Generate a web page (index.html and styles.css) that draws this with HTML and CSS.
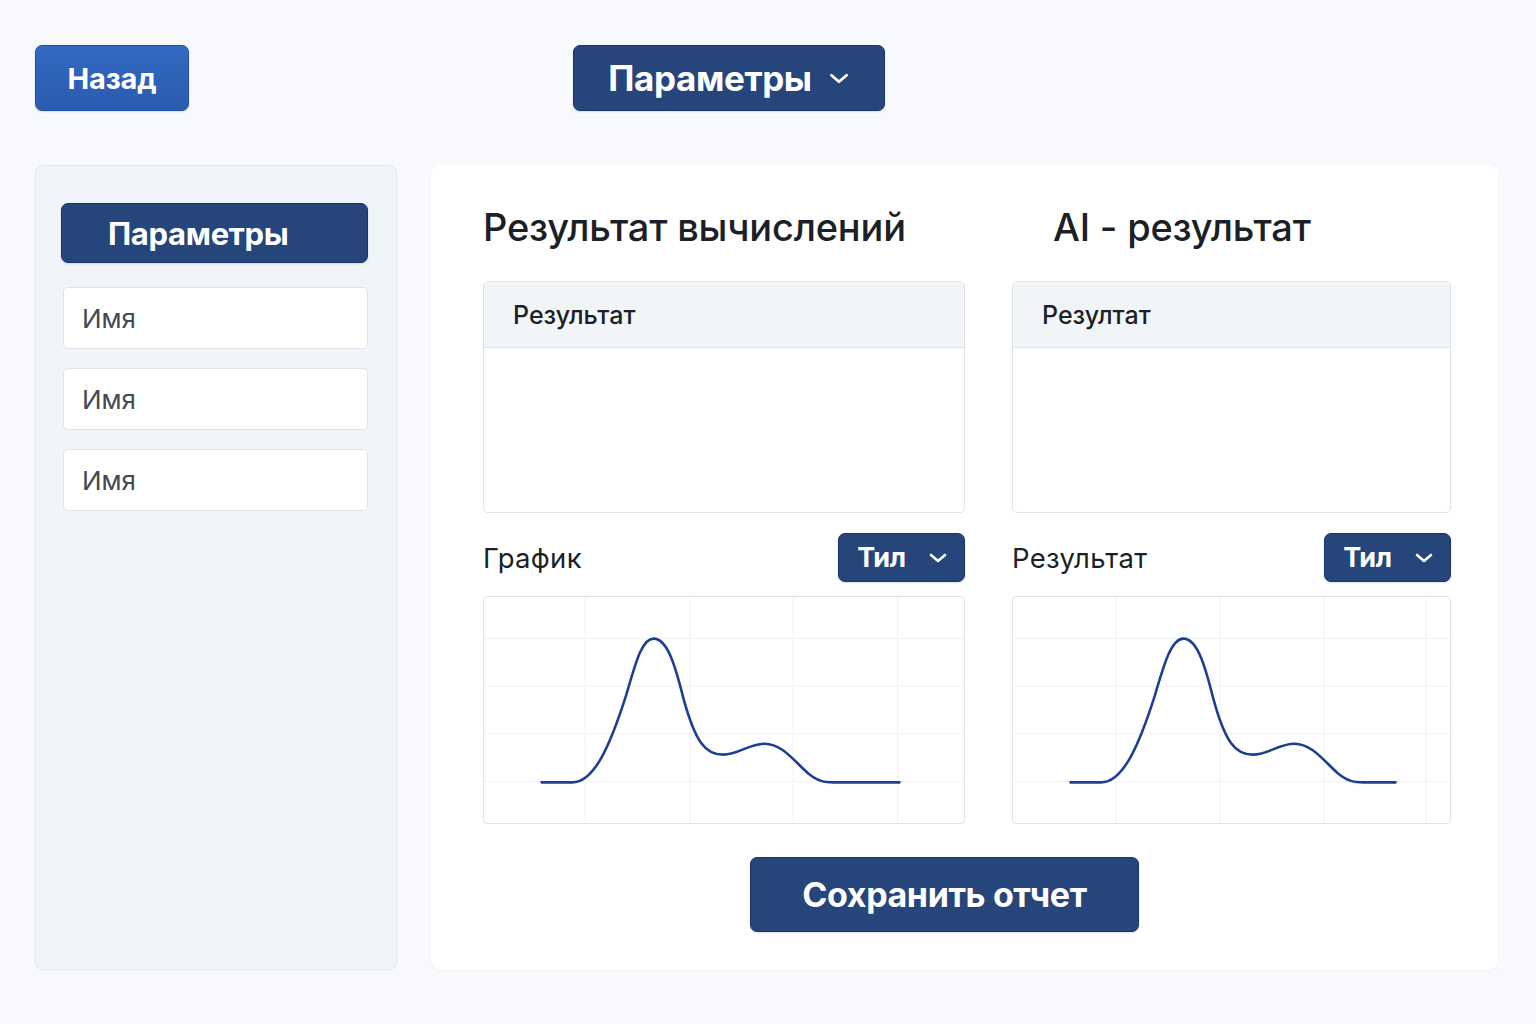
FILE: index.html
```html
<!DOCTYPE html>
<html lang="ru">
<head>
<meta charset="utf-8">
<title>Результат</title>
<link rel="stylesheet" href="styles.css">
</head>
<body>
<div class="page">
  <header class="topbar">
    <button class="btn btn-back">Назад</button>
    <button class="btn btn-params">Параметры
      <svg class="chev chev-lg" viewBox="0 0 20 12"><path d="M3 3 L10 9 L17 3"/></svg>
    </button>
  </header>
  <div class="content">
    <aside class="sidebar">
      <button class="btn btn-side">Параметры</button>
      <div class="field field-first">Имя</div>
      <div class="field">Имя</div>
      <div class="field">Имя</div>
    </aside>
    <main class="card">
      <div class="grid">
        <section class="col">
          <h2 class="title">Результат вычислений</h2>
          <div class="result">
            <div class="result-head">Результат</div>
            <div class="result-body"></div>
          </div>
          <div class="row">
            <span class="label">График</span>
            <button class="btn btn-type">Тил
              <svg class="chev" viewBox="0 0 20 12"><path d="M3 3 L10 9 L17 3"/></svg>
            </button>
          </div>
          <div class="chart">
            <svg viewBox="0 0 482 228" width="480" height="226">
              <g class="gridlines">
                <path d="M101 0 V228 M207 0 V228 M311 0 V228 M416 0 V228 M0 42 H482 M0 90 H482 M0 138 H482 M0 186 H482"/>
              </g>
              <path class="curve" d="M57,187 L88,187 C110,187 126,150 142,100 C152,66 158,42 170,42 C184,42 192,70 200,102 C212,146 222,159 240,159 C256,159 266,148 282,148 C300,148 312,166 326,178 C336,186 342,187 352,187 L418,187"/>
            </svg>
          </div>
        </section>
        <section class="col">
          <h2 class="title title-ai">AI - результат</h2>
          <div class="result">
            <div class="result-head">Резултат</div>
            <div class="result-body"></div>
          </div>
          <div class="row">
            <span class="label">Результат</span>
            <button class="btn btn-type">Тил
              <svg class="chev" viewBox="0 0 20 12"><path d="M3 3 L10 9 L17 3"/></svg>
            </button>
          </div>
          <div class="chart">
            <svg viewBox="0 0 439 228" width="437" height="226">
              <g class="gridlines">
                <path d="M103 0 V228 M208 0 V228 M313 0 V228 M416 0 V228 M0 42 H439 M0 90 H439 M0 138 H439 M0 186 H439"/>
              </g>
              <path class="curve" d="M57,187 L88,187 C110,187 126,150 142,100 C152,66 159,42 171,42 C185,42 193,70 201,102 C213,146 223,159 241,159 C257,159 267,148 283,148 C301,148 313,166 327,178 C337,186 343,187 353,187 L385,187"/>
            </svg>
          </div>
        </section>
      </div>
      <button class="btn btn-save">Сохранить отчет</button>
    </main>
  </div>
</div>
</body>
</html>
```
FILE: styles.css
```css
* { box-sizing: border-box; }
html, body { margin: 0; padding: 0; }
body {
  background: #f7f9fc;
  font-family: Inter, "Noto Sans", "Liberation Sans", sans-serif;
  color: #1a1d24;
}
.page {
  width: 1536px;
  height: 1024px;
  padding: 45px 38px 0 35px;
}
.btn {
  font-family: Inter, "Liberation Sans", sans-serif;
  font-weight: 700;
  color: #fff;
  border: 1px solid #1b3566;
  background: #25457b;
  border-radius: 7px;
  display: flex;
  align-items: center;
  justify-content: center;
  cursor: pointer;
  padding: 0;
  box-shadow: 0 1px 2px rgba(20, 40, 80, 0.15);
}
.topbar {
  display: flex;
  align-items: center;
  height: 66px;
}
.btn-back {
  width: 154px;
  height: 66px;
  font-size: 29px;
  background: linear-gradient(180deg, #3269c0 0%, #2a5bb0 100%);
  border-color: #234f9c;
  letter-spacing: -0.2px;
}
.btn-params {
  margin-left: 384px;
  width: 312px;
  height: 66px;
  font-size: 35px;
  gap: 16px;
  letter-spacing: -0.4px;
}
.chev {
  width: 20px;
  height: 12px;
  fill: none;
  stroke: #fff;
  stroke-width: 2.6;
  stroke-linecap: round;
  stroke-linejoin: round;
}
.chev-lg { width: 22px; height: 13px; }
.content {
  display: flex;
  gap: 34px;
  margin-top: 54px;
}
.sidebar {
  width: 362px;
  height: 805px;
  background: #f1f4f8;
  border: 1px solid #e2e7ee;
  border-radius: 8px;
  padding: 37px 28px 0 25px;
  display: flex;
  flex-direction: column;
}
.btn-side {
  width: 307px;
  height: 60px;
  font-size: 31px;
  justify-content: flex-start;
  padding-left: 46px;
  letter-spacing: -0.3px;
}
.field {
  margin-left: 2px;
  width: 305px;
  height: 62px;
  background: #fff;
  border: 1px solid #dfe4eb;
  border-radius: 5px;
  margin-top: 19px;
  display: flex;
  align-items: center;
  padding-left: 18px;
  font-size: 26px;
  color: #454a52;
}
.field.field-first { margin-top: 24px; }
.card {
  width: 1067px;
  height: 805px;
  background: #fff;
  border-radius: 10px;
  padding: 38px 47px 0 52px;
  box-shadow: 0 1px 3px rgba(30, 50, 90, 0.04);
}
.grid {
  display: grid;
  grid-template-columns: 482px 439px;
  column-gap: 47px;
}
.col { display: flex; flex-direction: column; }
.title {
  margin: 0;
  font-size: 38px;
  font-weight: 500;
  line-height: 48px;
  height: 48px;
  color: #1c1f26;
  letter-spacing: -0.2px;
}
.title-ai { padding-left: 41px; }
.result {
  margin-top: 30px;
  height: 232px;
  border: 1px solid #dde3ea;
  border-radius: 5px;
  overflow: hidden;
  background: #fff;
}
.result-head {
  height: 66px;
  background: #f2f5f8;
  border-bottom: 1px solid #dde3ea;
  display: flex;
  align-items: center;
  padding-left: 29px;
  font-size: 25px;
  font-weight: 500;
  color: #1c1f26;
}
.row {
  margin-top: 20px;
  height: 49px;
  display: flex;
  align-items: center;
  justify-content: space-between;
}
.label {
  font-size: 27.5px;
  color: #1c1f26;
}
.row .label:first-child { letter-spacing: 0.3px; }
.btn-type {
  width: 127px;
  height: 49px;
  font-size: 27px;
  gap: 22px;
  letter-spacing: -0.3px;
  padding-left: 2px;
}
.chart {
  margin-top: 14px;
  height: 228px;
  border: 1px solid #dde3ea;
  border-radius: 4px;
  background: #fff;
  overflow: hidden;
}
.chart svg { display: block; }
.gridlines path {
  stroke: #eef1f5;
  stroke-width: 1;
  fill: none;
}
.curve {
  fill: none;
  stroke: #1c3f94;
  stroke-width: 2.6;
  stroke-linecap: round;
  stroke-linejoin: round;
}
.btn-save {
  margin-top: 33px;
  margin-left: 267px;
  width: 389px;
  height: 75px;
  font-size: 34px;
  letter-spacing: -0.4px;
}
```
